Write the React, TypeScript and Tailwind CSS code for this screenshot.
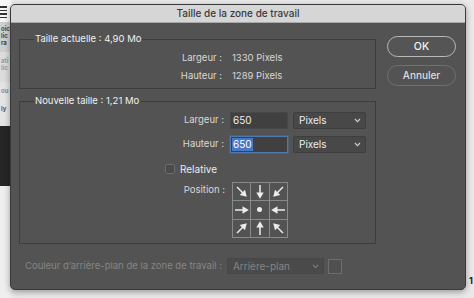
import React from "react";

const Arrow = ({ rot }: { rot: number }) => (
  <svg width="16" height="16" viewBox="0 0 16 16" style={{ transform: `rotate(${rot}deg)` }}>
    <line x1="8" y1="1" x2="8" y2="10" stroke="#ececec" strokeWidth="1.5" />
    <polygon points="4.3,8.5 11.7,8.5 8,14.8" fill="#ececec" />
  </svg>
);

const Chevron = ({ color }: { color: string }) => (
  <svg width="7" height="5" viewBox="0 0 7 5">
    <polyline points="1,1 3.5,3.6 6,1" fill="none" stroke={color} strokeWidth="1.1" />
  </svg>
);

export default function App() {
  // rotation: 0 = pointing down
  const cells: (number | null)[] = [-45, 0, 45, -90, null, 90, -135, 180, 135];
  return (
    <div className="relative w-[474px] h-[298px] overflow-hidden bg-[#e9e9e9] font-['Inter','Liberation_Sans',sans-serif]">
      {/* background page strip on the left */}
      <div className="flex flex-col w-[11px] h-full overflow-hidden">
        <div className="h-[22px] bg-[#f7f7f7] flex flex-col gap-[2px] pt-[6px]">
          <div className="w-[7px] h-[1.5px] bg-[#333]" />
          <div className="w-[7px] h-[1.5px] bg-[#333]" />
          <div className="w-[7px] h-[1.5px] bg-[#333]" />
          <div className="w-[7px] h-[1.5px] bg-[#333]" />
        </div>
        <div className="h-[30px] bg-[#cfcfcf] flex flex-col gap-[1px] pt-[4px] pl-[1px] text-[6px] leading-[6px] text-[#444] font-bold whitespace-nowrap overflow-hidden">
          <span>oic</span>
          <span>lic</span>
          <span>ra</span>
        </div>
        <div className="h-[30px] bg-[#dcdcdc] flex flex-col gap-[1px] pt-[6px] pl-[1px] text-[6px] leading-[6px] text-[#999] font-bold whitespace-nowrap overflow-hidden">
          <span>ati</span>
          <span>lic</span>
        </div>
        <div className="h-[44px] bg-[#e4e4e4] flex flex-col gap-[12px] pt-[6px] pl-[1px] text-[6px] leading-[6px] text-[#888] font-bold whitespace-nowrap overflow-hidden">
          <span>ou</span>
          <span className="text-[#555]">ly</span>
        </div>
        <div className="h-[60px] bg-[#262626]" />
        <div className="flex-1 bg-[#eeeeee]" />
      </div>
      <div className="absolute right-[1px] top-[274px] text-[9px] font-bold text-[#222]">1</div>

      {/* dialog window */}
      <div className="absolute left-[10px] top-[4px] w-[456px] h-[286px] rounded-[5px] overflow-hidden bg-[#535353] shadow-[0_2px_6px_rgba(0,0,0,0.35)] border border-[#3a3a3a] flex flex-col">
        <div className="h-[18px] shrink-0 bg-[#d6d6d6] border-b border-[#a9a9a9] flex items-center justify-center text-[10px] font-medium text-[#3a3a3a]">
          Taille de la zone de travail
        </div>
        <div className="flex flex-1 pt-[13px] pl-[8px]">
          {/* left column */}
          <div className="flex flex-col w-[357px]">
            {/* group 1 */}
            <div className="relative mt-[3px] h-[50px] border border-[#3d3d3d] flex flex-col pt-[9px] text-[9.5px] text-[#d8d8d8]">
              <span className="absolute -top-[7px] left-[14px] px-[1px] bg-[#535353] text-[9.5px] leading-[12px] text-[#f0f0f0]">
                Taille actuelle : 4,90 Mo
              </span>
              <div className="flex h-[18px] items-center">
                <span className="w-[202px] text-right">Largeur :</span>
                <span className="ml-[10px]">1330 Pixels</span>
              </div>
              <div className="flex h-[18px] items-center">
                <span className="w-[202px] text-right">Hauteur :</span>
                <span className="ml-[10px]">1289 Pixels</span>
              </div>
            </div>

            {/* group 2 */}
            <div className="relative mt-[12px] h-[143px] border border-[#3d3d3d] flex flex-col pt-[10px] text-[9.5px] text-[#d8d8d8]">
              <span className="absolute -top-[7px] left-[14px] px-[1px] bg-[#535353] text-[9.5px] leading-[12px] text-[#f0f0f0]">
                Nouvelle taille : 1,21 Mo
              </span>
              <div className="flex h-[17px] items-center">
                <span className="w-[204px] text-right">Largeur :</span>
                <div className="ml-[6px] w-[58px] h-[17px] bg-[#404040] border border-[#474747] flex items-center pl-[2px] text-[10px] text-[#efefef]">
                  650
                </div>
                <div className="ml-[5px] w-[73px] h-[17px] bg-[#484848] border border-[#3e3e3e] rounded-[2px] flex items-center justify-between pl-[5px] pr-[4px] text-[10px] text-[#ededed]">
                  <span>Pixels</span>
                  <Chevron color="#cfcfcf" />
                </div>
              </div>
              <div className="flex h-[17px] items-center mt-[7px]">
                <span className="w-[204px] text-right">Hauteur :</span>
                <div className="ml-[6px] w-[58px] h-[17px] bg-[#404040] border border-[#4f78ad] shadow-[0_0_0_1px_rgba(79,120,173,0.35)] flex items-center pl-[1px] text-[10px] text-[#ffffff]">
                  <span className="bg-[#4a78c4] px-[1px] leading-[13px]">650</span>
                </div>
                <div className="ml-[5px] w-[73px] h-[17px] bg-[#484848] border border-[#3e3e3e] rounded-[2px] flex items-center justify-between pl-[5px] pr-[4px] text-[10px] text-[#ededed]">
                  <span>Pixels</span>
                  <Chevron color="#cfcfcf" />
                </div>
              </div>
              <div className="flex items-center mt-[11px] ml-[145px] h-[10px]">
                <div className="w-[10px] h-[10px] rounded-[2px] border border-[#6c6c6c] bg-[#4a4a4a]" />
                <span className="ml-[5px] text-[10px] text-[#ececec]">Relative</span>
              </div>
              <div className="flex mt-[8px]">
                <span className="w-[205px] text-right mt-[2px] leading-[12px]">Position :</span>
                <div className="ml-[7px] grid grid-cols-3 w-[56px] h-[56px] border-t border-l border-[#8a8a8a]">
                  {cells.map((r, i) => (
                    <div key={i} className="border-r border-b border-[#8a8a8a] flex items-center justify-center">
                      {r === null ? (
                        <div className="w-[5px] h-[5px] rounded-full bg-[#ececec]" />
                      ) : (
                        <Arrow rot={r} />
                      )}
                    </div>
                  ))}
                </div>
              </div>
            </div>

            {/* background color row */}
            <div className="flex items-center mt-[14px] h-[16px] text-[9.5px] text-[#858585]">
              <span className="ml-[6px]">Couleur d’arrière-plan de la zone de travail :</span>
              <div className="ml-[5px] w-[97px] h-[16px] bg-[#4a4a4a] border border-[#474747] flex items-center justify-between pl-[5px] pr-[4px] text-[10px]">
                <span>Arrière-plan</span>
                <Chevron color="#7a7a7a" />
              </div>
              <div className="ml-[4px] w-[14px] h-[15px] border border-[#6e6e6e] bg-[#505050]" />
            </div>
          </div>

          {/* right column: buttons */}
          <div className="flex flex-col ml-[11px] w-[69px] gap-[8px]">
            <button className="h-[21px] rounded-full border-[1.5px] border-[#b9b9b9] text-[10.5px] font-medium text-[#f2f2f2] bg-[#555555]">
              OK
            </button>
            <button className="h-[21px] rounded-full border border-[#707070] text-[10px] font-medium text-[#dedede] bg-[#535353]">
              Annuler
            </button>
          </div>
        </div>
      </div>
    </div>
  );
}
